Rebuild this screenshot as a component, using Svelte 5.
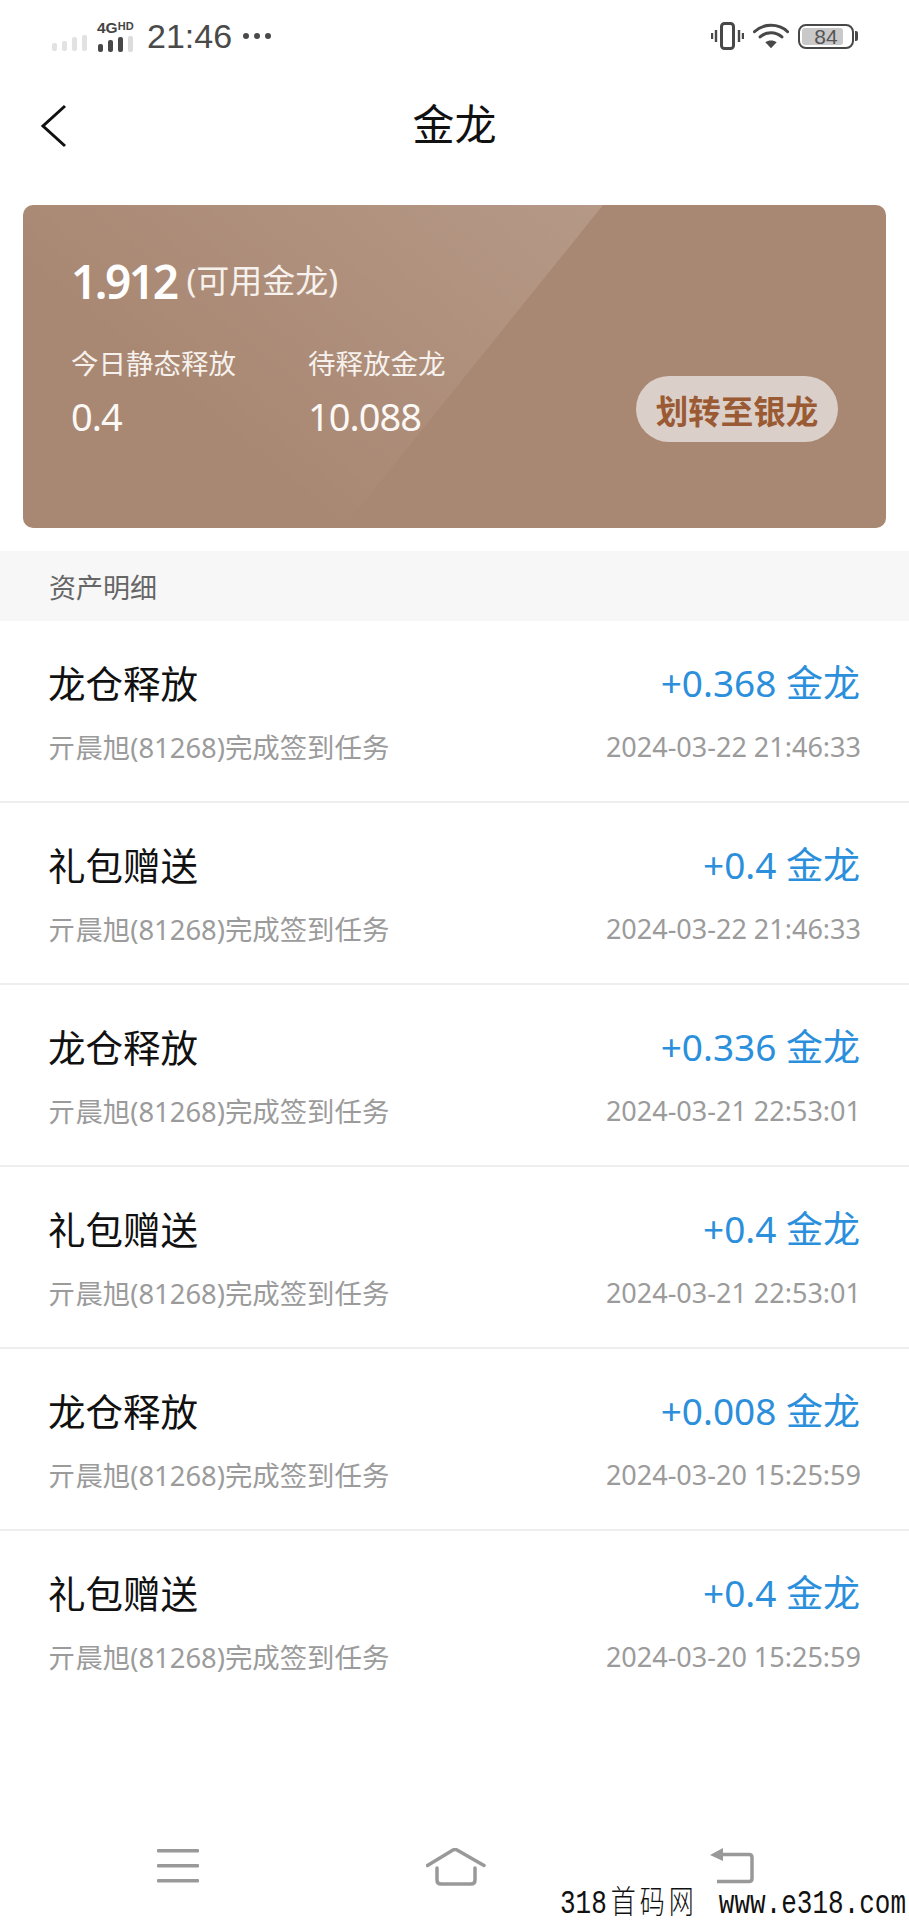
<script lang="ts">
	const records = [
		{ title: '龙仓释放', amount: '+0.368 金龙', time: '2024-03-22 21:46:33' },
		{ title: '礼包赠送', amount: '+0.4 金龙', time: '2024-03-22 21:46:33' },
		{ title: '龙仓释放', amount: '+0.336 金龙', time: '2024-03-21 22:53:01' },
		{ title: '礼包赠送', amount: '+0.4 金龙', time: '2024-03-21 22:53:01' },
		{ title: '龙仓释放', amount: '+0.008 金龙', time: '2024-03-20 15:25:59' },
		{ title: '礼包赠送', amount: '+0.4 金龙', time: '2024-03-20 15:25:59' }
	];
	const note = '亓晨旭(81268)完成签到任务';
</script>

<div class="page">
	<!-- Status bar -->
	<div class="status">
		<div class="status-left">
			<svg class="signal" width="38" height="18" viewBox="0 0 38 18">
				<rect x="1" y="10" width="5" height="8" rx="2" fill="#e2e2e2" />
				<rect x="11" y="8" width="5" height="10" rx="2" fill="#e2e2e2" />
				<rect x="21" y="4" width="5" height="14" rx="2" fill="#e2e2e2" />
				<rect x="31" y="2" width="5" height="16" rx="2" fill="#e2e2e2" />
			</svg>
			<div class="net">
				<span class="net-label">4G<small>HD</small></span>
				<svg width="38" height="16" viewBox="0 0 38 16">
					<rect x="1" y="8" width="5" height="8" rx="2" fill="#484848" />
					<rect x="11" y="4" width="5" height="12" rx="2" fill="#484848" />
					<rect x="21" y="1" width="5" height="15" rx="2" fill="#484848" />
					<rect x="31" y="0" width="5" height="16" rx="2" fill="#dcdcdc" />
				</svg>
			</div>
			<span class="clock">21:46</span>
			<span class="dots"><i></i><i></i><i></i></span>
		</div>
		<div class="status-right">
			<svg width="33" height="28" viewBox="0 0 33 28" fill="none" stroke="#484848">
				<rect x="10.5" y="1.5" width="12" height="25" rx="3" stroke-width="3" />
				<path d="M5 8v12M1 11v6M28 8v12M32 11v6" stroke-width="2.4" />
			</svg>
			<svg width="36" height="28" viewBox="0 0 38 28" fill="none" stroke="#484848" stroke-width="3.2" stroke-linecap="round">
				<path d="M1.5 9.5C11 0.5 27 0.5 36.5 9.5" />
				<path d="M7.5 15C14 9 24 9 30.5 15" />
				<path d="M19 27l-6-6.500c3.500-2.500 8.500-2.500 12 0z" fill="#484848" stroke="none" />
			</svg>
			<div class="battery">
				<div class="battery-body">
					<span class="battery-fill"></span>
					<span class="battery-num">84</span>
				</div>
				<span class="battery-tip"></span>
			</div>
		</div>
	</div>

	<!-- Header -->
	<header class="nav">
		<svg class="back" width="28" height="44" viewBox="0 0 28 44" fill="none" stroke="#111" stroke-width="3">
			<path d="M25 2L3 22l22 20" />
		</svg>
		<h1>金龙</h1>
	</header>

	<!-- Balance card -->
	<section class="card">
		<div class="shine"></div>
		<div class="balance">
			<strong>1.912</strong>
			<span>(可用金龙)</span>
		</div>
		<div class="stats">
			<div class="stat">
				<span class="stat-label">今日静态释放</span>
				<span class="stat-value">0.4</span>
			</div>
			<div class="stat">
				<span class="stat-label">待释放金龙</span>
				<span class="stat-value">10.088</span>
			</div>
			<button class="transfer">划转至银龙</button>
		</div>
	</section>

	<div class="section-title">资产明细</div>

	<ul class="list">
		{#each records as r}
			<li class="row">
				<div class="line">
					<span class="title">{r.title}</span>
					<span class="amount">{r.amount}</span>
				</div>
				<div class="line sub">
					<span class="note">{note}</span>
					<span>{r.time}</span>
				</div>
			</li>
		{/each}
	</ul>

	<!-- System navigation -->
	<footer class="sysnav">
		<svg width="44" height="36" viewBox="0 0 44 36" fill="#999">
			<rect x="1" y="1" width="42" height="3.500" rx="1" />
			<rect x="1" y="16" width="42" height="3.500" rx="1" />
			<rect x="1" y="31" width="42" height="3.500" rx="1" />
		</svg>
		<svg width="60" height="38" viewBox="0 0 60 38" fill="none" stroke="#999" stroke-width="3.500" stroke-linejoin="round" stroke-linecap="round">
			<path d="M1.500 17.500L27 2q2-1 4 0L58 17.500" />
			<path d="M11 20v12q0 4 4 4h30q4 0 4-4V20" />
		</svg>
		<svg width="46" height="36" viewBox="0 0 46 36" fill="none">
			<path d="M0 7L13 0v13z" fill="#999" />
			<path d="M11 6.500h28q3 0 3 3v21q0 3-3 3H7" stroke="#999" stroke-width="3.500" />
		</svg>
	</footer>

	<div class="watermark">318<span>首码网</span>www.e318.com</div>
</div>

<style>
	:global(body) {
		margin: 0;
		background: #fff;
	}

	.page {
		position: relative;
		width: 909px;
		height: 1920px;
		overflow: hidden;
		display: flex;
		flex-direction: column;
		background: #fff;
		font-family: "Noto Sans", "Noto Sans CJK SC", sans-serif;
		color: #111;
	}

	/* ── Status bar ─────────────────────────────────────── */
	.status {
		height: 72px;
		padding: 0 12px 0 51px;
		display: flex;
		align-items: center;
		justify-content: space-between;
		box-sizing: border-box;
	}

	.status-left,
	.status-right {
		display: flex;
		align-items: center;
	}

	.signal {
		margin-top: 12px;
		margin-right: 8px;
	}

	.net {
		display: flex;
		flex-direction: column;
		width: 40px;
		margin-top: -3px;
	}

	.net-label {
		font: 700 15.500px/16px "Liberation Sans", sans-serif;
		color: #444;
	}

	.net-label small {
		font-size: 11px;
		vertical-align: 3px;
	}

	.clock {
		margin-left: 10px;
		font: 34px/1 "Liberation Sans", sans-serif;
		color: #4a4a4a;
	}

	.dots {
		display: flex;
		gap: 5px;
		margin-left: 11px;
	}

	.dots i {
		width: 6px;
		height: 6px;
		border-radius: 50%;
		background: #4a4a4a;
	}

	.status-right {
		gap: 9px;
		padding-right: 39px;
	}

	.battery {
		display: flex;
		align-items: center;
	}

	.battery-body {
		position: relative;
		width: 56px;
		height: 25px;
		box-sizing: border-box;
		border: 2px solid #484848;
		border-radius: 8px;
		display: flex;
		align-items: center;
		justify-content: center;
		overflow: hidden;
	}

	.battery-fill {
		position: absolute;
		left: 2px;
		top: 2px;
		bottom: 2px;
		width: 41px;
		background: #c9c9c9;
		border-radius: 3px;
	}

	.battery-num {
		position: relative;
		font: 21px/1 "Liberation Sans", sans-serif;
		color: #555;
	}

	.battery-tip {
		width: 3px;
		height: 10px;
		margin-left: 1px;
		background: #484848;
		border-radius: 0 2px 2px 0;
	}

	/* ── Header ─────────────────────────────────────────── */
	.nav {
		position: relative;
		height: 108px;
		display: flex;
		align-items: center;
		justify-content: center;
	}

	.back {
		position: absolute;
		left: 40px;
		top: 32px;
	}

	h1 {
		margin: -8px 0 0;
		font-size: 42px;
		font-weight: 400;
		font-family: "Noto Sans CJK SC", sans-serif;
		line-height: 1;
	}

	/* ── Card ───────────────────────────────────────────── */
	.card {
		position: relative;
		margin: 25px 23px 0 23px;
		height: 323px;
		box-sizing: border-box;
		padding: 50px 48px 0;
		border-radius: 10px;
		background: #a98873;
		overflow: hidden;
		color: #fff;
	}

	.shine {
		position: absolute;
		inset: 0;
		background: linear-gradient(220deg, rgba(255, 255, 255, 0.14) 23%, rgba(255, 255, 255, 0) 75%);
		clip-path: polygon(0 0, 580px 0, 320px 323px, 0 323px);
	}

	.balance {
		position: relative;
		display: flex;
		align-items: center;
		gap: 10px;
	}

	.balance strong {
		font-size: 46px;
		font-weight: 600;
		line-height: 52px;
		letter-spacing: -2.500px;
	}

	.balance span {
		font-size: 33px;
		line-height: 52px;
		color: #f6f1ec;
	}

	.stats {
		position: relative;
		display: flex;
		align-items: flex-start;
		margin-top: 37px;
	}

	.stat {
		display: flex;
		flex-direction: column;
		width: 237px;
	}

	.stat-label {
		font-size: 27.500px;
		line-height: 40px;
		color: #f6f1ec;
	}

	.stat-value {
		margin-top: 8px;
		font-size: 38px;
		line-height: 48px;
		letter-spacing: -1px;
		color: #fbf8f5;
	}

	.transfer {
		position: absolute;
		right: 0;
		top: 32px;
		width: 202px;
		height: 66px;
		border: 0;
		padding: 0;
		border-radius: 33px;
		background: #dbcfc9;
		color: #9a5a33;
		font-family: "Noto Sans CJK SC", sans-serif;
		font-size: 32.500px;
		font-weight: 700;
	}

	/* ── List ───────────────────────────────────────────── */
	.section-title {
		margin-top: 23px;
		height: 70px;
		padding: 0 49px;
		display: flex;
		align-items: center;
		background: #f7f7f7;
		color: #666;
		font-size: 27px;
	}

	.list {
		margin: 0;
		padding: 0;
		list-style: none;
	}

	.row {
		height: 182px;
		box-sizing: border-box;
		padding: 34px 48px 0 48px;
		border-bottom: 2px solid #eee;
	}

	.row:last-child {
		border-bottom: 0;
	}

	.line {
		display: flex;
		justify-content: space-between;
		align-items: center;
		height: 52px;
	}

	.title {
		font-size: 37.500px;
		color: #111;
	}

	.amount {
		margin-right: 1px;
		font-size: 37px;
		color: #2b8fdc;
	}

	.sub {
		margin-top: 13px;
		font-size: 27px;
		color: #9b9b9b;
	}

	.note {
		font-size: 27.400px;
	}

	/* ── System nav ─────────────────────────────────────── */
	.sysnav {
		position: absolute;
		left: 0;
		right: 0;
		top: 1848px;
		display: grid;
		grid-template-columns: 270px 284px auto;
		align-items: start;
		padding-left: 156px;
	}

	.watermark {
		position: absolute;
		left: 560px;
		bottom: 1px;
		font-family: "Liberation Mono", monospace;
		font-size: 26px;
		line-height: 24px;
		color: #111;
		white-space: pre;
		transform: scaleY(1.25);
		transform-origin: bottom;
	}

	.watermark span {
		margin: 0 21px 0 4px;
		font-family: "Noto Sans CJK SC", sans-serif;
		font-size: 25px;
		letter-spacing: 4px;
		font-weight: 300;
		line-height: 24px;
	}
</style>
